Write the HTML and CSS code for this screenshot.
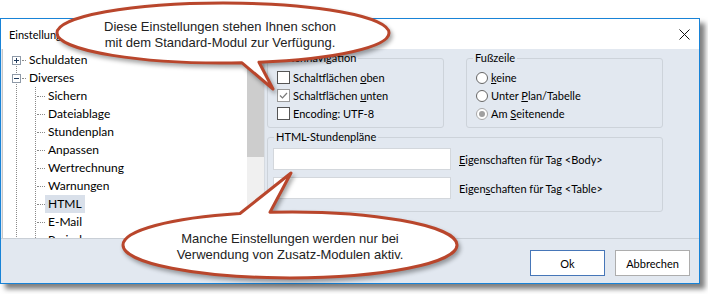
FILE: index.html
```html
<!DOCTYPE html>
<html lang="de">
<head>
  <meta charset="UTF-8" />
  <title>Einstellungen</title>
  <link rel="stylesheet" href="styles.css">
</head>
<body>
  <div class="stage">
    <div class="dialog">
      <div class="titlebar">
        <span class="title">Einstellungen</span>
        <svg class="close" width="11" height="11" viewBox="0 0 11 11">
          <path d="M0.5 0.5 L10.5 10.5 M10.5 0.5 L0.5 10.5" stroke="#111" stroke-width="1" fill="none"/>
        </svg>
      </div>

      <div class="client">
        <div class="main">
          <div class="tree">
            <ul class="nodes">
              <li class="node">
                <svg class="exp" width="9" height="9" viewBox="0 0 9 9">
                  <rect x="0.5" y="0.5" width="8" height="8" fill="#fff" stroke="#8f9aa8"/>
                  <path d="M2 4.5 H7 M4.5 2 V7" stroke="#1f3a5c"/>
                </svg>
                <span class="hline"></span><span class="label">Schuldaten</span>
              </li>
              <li class="node">
                <svg class="exp" width="9" height="9" viewBox="0 0 9 9">
                  <rect x="0.5" y="0.5" width="8" height="8" fill="#fff" stroke="#8f9aa8"/>
                  <path d="M2 4.5 H7" stroke="#1f3a5c"/>
                </svg>
                <span class="hline"></span><span class="label">Diverses</span>
              </li>
              <li class="node child"><span class="hline"></span><span class="label">Sichern</span></li>
              <li class="node child"><span class="hline"></span><span class="label">Dateiablage</span></li>
              <li class="node child"><span class="hline"></span><span class="label">Stundenplan</span></li>
              <li class="node child"><span class="hline"></span><span class="label">Anpassen</span></li>
              <li class="node child"><span class="hline"></span><span class="label">Wertrechnung</span></li>
              <li class="node child"><span class="hline"></span><span class="label">Warnungen</span></li>
              <li class="node child"><span class="hline"></span><span class="label selected">HTML</span></li>
              <li class="node child"><span class="hline"></span><span class="label">E-Mail</span></li>
              <li class="node child"><span class="hline"></span><span class="label">Perioden</span></li>
            </ul>
            <div class="scrollbar"><div class="thumb"></div></div>
          </div>

          <div class="pane">
            <div class="pane-row">
              <fieldset class="group group-nav">
                <legend>Seitennavigation</legend>
                <div class="opt"><span class="check"></span><span>Schaltflächen <u>o</u>ben</span></div>
                <div class="opt"><span class="check checked">
                  <svg width="11" height="11" viewBox="0 0 11 11"><path d="M2 5.5 L4.5 8 L9 3" stroke="#7a7a7a" stroke-width="1.2" fill="none"/></svg>
                </span><span>Schaltflächen <u>u</u>nten</span></div>
                <div class="opt"><span class="check"></span><span>Encoding: UTF-8</span></div>
              </fieldset>

              <fieldset class="group group-footer">
                <legend>Fußzeile</legend>
                <div class="opt"><span class="radio"></span><span><u>k</u>eine</span></div>
                <div class="opt"><span class="radio"></span><span>Unter <u>P</u>lan/Tabelle</span></div>
                <div class="opt"><span class="radio selected"></span><span>Am <u>S</u>eitenende</span></div>
              </fieldset>
            </div>

            <fieldset class="group group-html">
              <legend>HTML-Stundenpläne</legend>
              <div class="field"><span class="textbox"></span><span><u>E</u>igenschaften für Tag &lt;Body&gt;</span></div>
              <div class="field"><span class="textbox"></span><span>Eigen<u>s</u>chaften für Tag &lt;Table&gt;</span></div>
            </fieldset>
          </div>
        </div>

        <div class="buttons">
          <button class="btn btn-default">Ok</button>
          <button class="btn">Abbrechen</button>
        </div>
      </div>
    </div>

    <!-- Hinweis-Sprechblasen -->
    <svg class="callouts" width="708" height="294" viewBox="0 0 708 294">
      <g class="bubble">
        <path d="M259 62.2 A166 30 0 0 0 389 33 A166 30 0 0 0 57 33 A166 30 0 0 0 242 62.8 L273 89 Z"/>
        <text x="220" y="31">Diese Einstellungen stehen Ihnen schon</text>
        <text x="220" y="47">mit dem Standard-Modul zur Verfügung.</text>
      </g>
      <g class="bubble">
        <path d="M240 213.5 L291 173 L270 212.2 A167 33 0 0 1 457 245 A167 33 0 0 1 123 245 A167 33 0 0 1 240 213.5 Z"/>
        <text x="290" y="243">Manche Einstellungen werden nur bei</text>
        <text x="290" y="259">Verwendung von Zusatz-Modulen aktiv.</text>
      </g>
    </svg>
  </div>
</body>
</html>
```

FILE: styles.css
```css
:root {
  --win-blue: #1883d7;
  --client-bg: #e2e8f0;
  --group-border: #cdd3da;
  --dots: repeating-linear-gradient(to bottom, #8a8a8a 0 1px, transparent 1px 2px);
}

body {
  margin: 0;
  font-family: Lato, 'Liberation Sans', sans-serif;
  font-size: 11px;
  color: #000;
  background: #fff;
}

.stage {
  position: relative;
  width: 708px;
  height: 294px;
  padding-top: 18px;
  box-sizing: border-box;
  overflow: hidden;
}

.dialog {
  width: 700px;
  height: 266px;
  box-sizing: border-box;
  border: 1px solid var(--win-blue);
  background: #fff;
  box-shadow: 5px 5px 5px rgba(0, 0, 0, 0.5);
  display: flex;
  flex-direction: column;
}

.titlebar {
  height: 30px;
  flex: none;
  display: flex;
  align-items: center;
  justify-content: space-between;
  padding: 0 9px 0 8px;
}

.client {
  flex: 1;
  background: var(--client-bg);
  display: flex;
  flex-direction: column;
}

.main {
  height: 189px;
  display: flex;
  padding-left: 1px;
}

/* Baumansicht */
.tree {
  width: 263px;
  box-sizing: border-box;
  border-left: 1px solid #c8c8c8;
  border-right: 1px solid #d6dbe1;
  display: flex;
  overflow: hidden;
  font-size: 12px;
  background:
    var(--dots) 13px 11px / 1px 100% no-repeat,
    var(--dots) 32px 38px / 1px 100% no-repeat,
    #fff;
}

.nodes {
  flex: 1;
  list-style: none;
  margin: 0;
  padding: 2px 0 0 9px;
}

.node {
  height: 18px;
  display: flex;
  align-items: center;
}

.node.child {
  padding-left: 24px;
}

.exp {
  flex: none;
  display: block;
}

.hline {
  width: 4px;
  margin-left: 1px;
  border-top: 1px dotted #8a8a8a;
}

.child .hline {
  width: 8px;
}

.label {
  padding: 1px 3px;
  line-height: 16px;
  white-space: nowrap;
}

.label.selected {
  background: #d9e0ea;
}

.scrollbar {
  width: 17px;
  flex: none;
  background: #f0f0f0;
}

.thumb {
  height: 108px;
  background: #cdcdcd;
}

/* rechte Seite */
.pane {
  flex: 1;
  padding: 1px 0 0 2px;
}

.pane-row {
  display: flex;
  gap: 22px;
}

.group {
  box-sizing: border-box;
  min-width: 0;
  margin: 0;
  border: 1px solid var(--group-border);
  border-radius: 3px;
  padding: 3px 6px 5px 9px;
}

.group legend {
  padding: 0 2px;
  margin-left: -3px;
  line-height: 16px;
}

.group-nav { width: 177px; }
.group-footer { width: 197px; }

.group-html {
  width: 396px;
  margin-top: 1px;
  padding: 3px 6px 12px 5px;
}

.group-html legend {
  margin-left: 1px;
}

.opt {
  height: 17px;
  display: flex;
  align-items: center;
  white-space: nowrap;
}

.opt + .opt {
  margin-top: 1px;
}

.check {
  width: 13px;
  height: 13px;
  flex: none;
  box-sizing: border-box;
  border: 1px solid #555;
  background: #fff;
  margin-right: 3px;
  display: flex;
  align-items: center;
  justify-content: center;
}

.check.checked {
  border-color: #9a9a9a;
}

.radio {
  width: 12px;
  height: 12px;
  flex: none;
  box-sizing: border-box;
  border: 1px solid #666;
  border-radius: 50%;
  background: #fff;
  margin-right: 3px;
  display: flex;
  align-items: center;
  justify-content: center;
}

.radio.selected {
  border-color: #a8a8a8;
}

.radio.selected::after {
  content: '';
  width: 6px;
  height: 6px;
  border-radius: 50%;
  background: #a0a0a0;
}

.field {
  display: flex;
  align-items: center;
  gap: 8px;
}

.field + .field {
  margin-top: 7px;
}

.textbox {
  width: 178px;
  height: 22px;
  box-sizing: border-box;
  border: 1px solid #d3d7dc;
  background: #fff;
}

/* Schaltflächen */
.buttons {
  flex: 1;
  border-top: 1px solid #c9cfd6;
  display: flex;
  justify-content: flex-end;
  align-items: flex-start;
  gap: 10px;
  padding: 11px 9px 0 0;
}

.btn {
  width: 75px;
  height: 26px;
  padding: 0;
  border: 1px solid #adadad;
  background: #fff;
  font: inherit;
  color: #000;
}

.btn-default {
  border-color: #4676b8;
}

/* Sprechblasen */
.callouts {
  position: absolute;
  left: 0;
  top: 0;
  pointer-events: none;
}

.bubble path {
  fill: #fff;
  stroke: #b9462c;
  stroke-width: 3;
  stroke-linejoin: round;
  filter: drop-shadow(2px 3px 2px rgba(0, 0, 0, 0.35));
}

.bubble text {
  font-family: 'Liberation Sans', Arial, sans-serif;
  font-size: 13px;
  fill: #222;
  text-anchor: middle;
}
```
